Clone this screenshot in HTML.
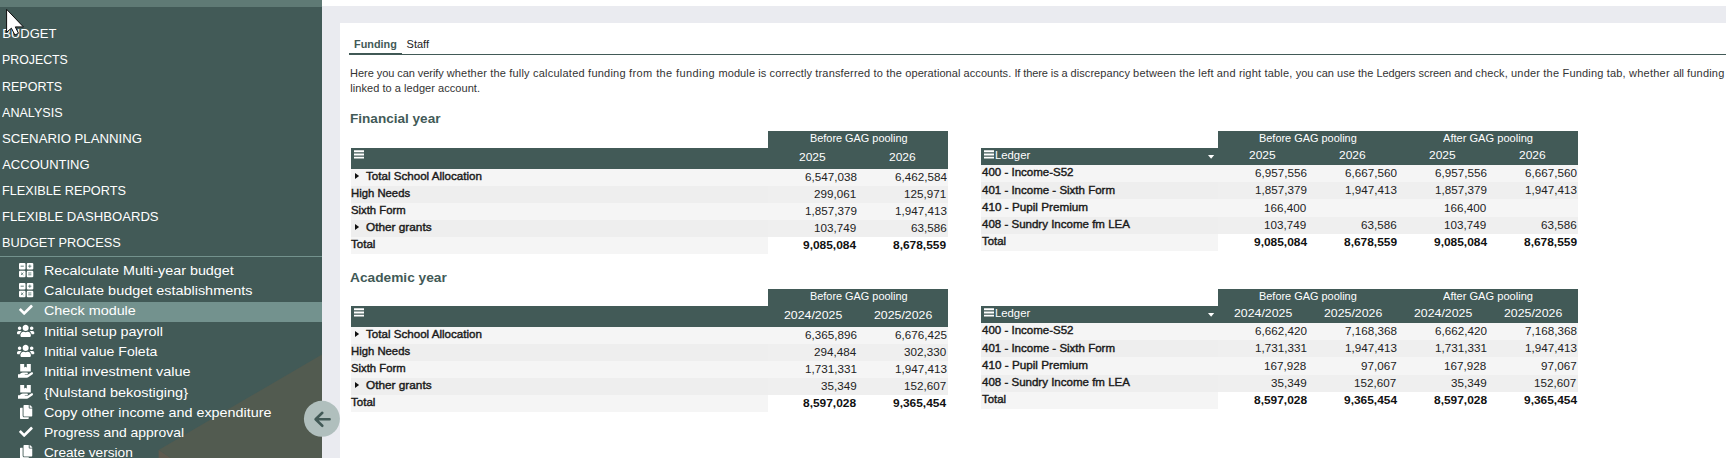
<!DOCTYPE html>
<html>
<head>
<meta charset="utf-8">
<title>Check module</title>
<style>
*{box-sizing:border-box;margin:0;padding:0}
html,body{width:1726px;height:458px;overflow:hidden;background:#fff;font-family:"Liberation Sans",sans-serif}
body{position:relative}
.x{position:absolute;white-space:pre;transform-origin:0 50%}
.r{position:absolute}
svg{position:absolute;overflow:visible}
</style>
</head>
<body>
<div class="r" style="left:322px;top:0px;width:1404px;height:6px;background:#fff;"></div>
<div class="r" style="left:322px;top:6px;width:1404px;height:452px;background:#eaebf0;"></div>
<div class="r" style="left:340px;top:23px;width:1386px;height:435px;background:#fff;"></div>
<div class="r" style="left:0px;top:0px;width:322px;height:458px;background:#425a57;"></div>
<div class="r" style="left:0px;top:0px;width:322px;height:7px;background:#5f7a75;"></div>
<svg style="left:0;top:0" width="322" height="458" viewBox="0 0 322 458"><polygon points="322,354.4 158.6,450 170.7,458 322,458" fill="#525b50"/><polygon points="158.6,450 158.6,458 170.7,458" fill="#5e5a4e"/></svg>
<div class="r" style="left:0px;top:256px;width:322px;height:1px;background:#73928d;"></div>
<div class="r" style="left:0px;top:302px;width:322px;height:20px;background:#73928e;"></div>
<div class="x" style="top:25.50px;font-size:13px;line-height:16px;color:#fff;left:2.20px;">BUDGET</div>
<div class="x" style="top:51.50px;font-size:13px;line-height:16px;color:#fff;left:2.20px;transform:scaleX(0.9489);">PROJECTS</div>
<div class="x" style="top:78.50px;font-size:13px;line-height:16px;color:#fff;left:2.20px;transform:scaleX(0.9615);">REPORTS</div>
<div class="x" style="top:104.50px;font-size:13px;line-height:16px;color:#fff;left:2.20px;transform:scaleX(0.9677);">ANALYSIS</div>
<div class="x" style="top:130.50px;font-size:13px;line-height:16px;color:#fff;left:2.20px;transform:scaleX(1.0146);">SCENARIO PLANNING</div>
<div class="x" style="top:156.50px;font-size:13px;line-height:16px;color:#fff;left:2.20px;">ACCOUNTING</div>
<div class="x" style="top:182.50px;font-size:13px;line-height:16px;color:#fff;left:2.20px;transform:scaleX(0.9762);">FLEXIBLE REPORTS</div>
<div class="x" style="top:208.50px;font-size:13px;line-height:16px;color:#fff;left:2.20px;transform:scaleX(1.0082);">FLEXIBLE DASHBOARDS</div>
<div class="x" style="top:234.50px;font-size:13px;line-height:16px;color:#fff;left:2.20px;transform:scaleX(0.9808);">BUDGET PROCESS</div>
<div class="x" style="top:262.50px;font-size:13px;line-height:16px;color:#fff;left:44.40px;transform:scaleX(1.1036);">Recalculate Multi-year budget</div>
<svg style="left:18.9px;top:262.80px" width="14.3" height="14.3" viewBox="0 0 14.3 14.3"><rect x="0.00" y="0.00" width="6.5" height="6.5" rx="1.1" fill="#fff"/><rect x="7.80" y="0.00" width="6.5" height="6.5" rx="1.1" fill="#fff"/><rect x="0.00" y="7.80" width="6.5" height="6.5" rx="1.1" fill="#fff"/><rect x="7.80" y="7.80" width="6.5" height="6.5" rx="1.1" fill="#fff"/><path d="M1.6 3.2h3.2" stroke="#61807b" stroke-width="1" fill="none"/><path d="M9.2 3.2h3.2M10.8 1.6v3.2" stroke="#61807b" stroke-width="1" fill="none"/><path d="M2 9.6l2.4 2.4M4.400 9.600l-2.400 2.400" stroke="#61807b" stroke-width="0.9" fill="none"/><path d="M9.200 10h3.200M9.200 11.800h3.200" stroke="#61807b" stroke-width="0.9" fill="none"/></svg>
<div class="x" style="top:282.50px;font-size:13px;line-height:16px;color:#fff;left:44.40px;transform:scaleX(1.1092);">Calculate budget establishments</div>
<svg style="left:18.9px;top:282.80px" width="14.3" height="14.3" viewBox="0 0 14.3 14.3"><rect x="0.00" y="0.00" width="6.5" height="6.5" rx="1.1" fill="#fff"/><rect x="7.80" y="0.00" width="6.5" height="6.5" rx="1.1" fill="#fff"/><rect x="0.00" y="7.80" width="6.5" height="6.5" rx="1.1" fill="#fff"/><rect x="7.80" y="7.80" width="6.5" height="6.5" rx="1.1" fill="#fff"/><path d="M1.6 3.2h3.2" stroke="#61807b" stroke-width="1" fill="none"/><path d="M9.2 3.2h3.2M10.8 1.6v3.2" stroke="#61807b" stroke-width="1" fill="none"/><path d="M2 9.6l2.4 2.4M4.400 9.600l-2.400 2.400" stroke="#61807b" stroke-width="0.9" fill="none"/><path d="M9.200 10h3.200M9.200 11.800h3.200" stroke="#61807b" stroke-width="0.9" fill="none"/></svg>
<div class="x" style="top:302.50px;font-size:13px;line-height:16px;color:#fff;left:44.40px;transform:scaleX(1.1046);">Check module</div>
<svg style="left:19.1px;top:303.40px" width="13.8" height="13.8" viewBox="0 0 512 512"><path fill="#fff" d="M173.898 439.404l-166.4-166.4c-9.997-9.997-9.997-26.206 0-36.204l36.203-36.204c9.997-9.998 26.207-9.998 36.204 0L192 312.69 432.095 72.596c9.997-9.997 26.207-9.997 36.204 0l36.203 36.204c9.997 9.997 9.997 26.206 0 36.204l-294.4 294.401c-9.998 9.997-26.207 9.997-36.204-.001z"/></svg>
<div class="x" style="top:323.50px;font-size:13px;line-height:16px;color:#fff;left:44.40px;transform:scaleX(1.1043);">Initial setup payroll</div>
<svg style="left:17.3px;top:324.18px" width="17.3" height="13.84" viewBox="0 0 640 512"><path fill="#fff" d="M96 224c35.3 0 64-28.7 64-64s-28.7-64-64-64-64 28.7-64 64 28.7 64 64 64zm448 0c35.3 0 64-28.7 64-64s-28.7-64-64-64-64 28.7-64 64 28.7 64 64 64zm32 32h-64c-17.6 0-33.500 7.100-45.100 18.600 40.300 22.100 68.900 62 75.100 109.400h66c17.700 0 32-14.300 32-32v-32c0-35.300-28.700-64-64-64zm-256 0c61.900 0 112-50.100 112-112S381.900 32 320 32 208 82.100 208 144s50.100 112 112 112zm76.800 32h-8.300c-20.800 10-43.900 16-68.500 16s-47.600-6-68.500-16h-8.300C179.600 288 128 339.600 128 403.200V432c0 26.500 21.500 48 48 48h288c26.500 0 48-21.500 48-48v-28.800c0-63.600-51.600-115.200-115.200-115.200zm-223.700-13.400C161.500 263.100 145.600 256 128 256H64c-35.300 0-64 28.700-64 64v32c0 17.700 14.300 32 32 32h65.900c6.300-47.400 34.900-87.300 75.200-109.400z"/></svg>
<div class="x" style="top:343.50px;font-size:13px;line-height:16px;color:#fff;left:44.40px;transform:scaleX(1.0823);">Initial value Foleta</div>
<svg style="left:17.3px;top:344.18px" width="17.3" height="13.84" viewBox="0 0 640 512"><path fill="#fff" d="M96 224c35.3 0 64-28.7 64-64s-28.7-64-64-64-64 28.7-64 64 28.7 64 64 64zm448 0c35.3 0 64-28.7 64-64s-28.7-64-64-64-64 28.7-64 64 28.7 64 64 64zm32 32h-64c-17.6 0-33.500 7.100-45.100 18.600 40.300 22.100 68.900 62 75.100 109.400h66c17.700 0 32-14.300 32-32v-32c0-35.300-28.700-64-64-64zm-256 0c61.900 0 112-50.100 112-112S381.900 32 320 32 208 82.100 208 144s50.100 112 112 112zm76.800 32h-8.300c-20.800 10-43.900 16-68.500 16s-47.600-6-68.500-16h-8.300C179.600 288 128 339.600 128 403.200V432c0 26.500 21.500 48 48 48h288c26.500 0 48-21.500 48-48v-28.800c0-63.600-51.600-115.200-115.200-115.200zm-223.700-13.400C161.500 263.100 145.600 256 128 256H64c-35.300 0-64 28.700-64 64v32c0 17.700 14.300 32 32 32h65.900c6.300-47.400 34.900-87.300 75.200-109.400z"/></svg>
<div class="x" style="top:363.50px;font-size:13px;line-height:16px;color:#fff;left:44.40px;transform:scaleX(1.1147);">Initial investment value</div>
<svg style="left:18.2px;top:364.20px" width="15.6" height="14" viewBox="0 0 15.600 14"><path fill="#fff" d="M2.200 0H6.200V3.500l1.300-0.800 1.300 0.800V0H12.800V7.400H2.200z"/><path fill="#fff" d="M0 10.200h1.600l1.500-1.100c0.500-0.400 1.100-0.600 1.700-0.600h4.100c0.600 0 1 0.400 1 0.900s-0.400 0.900-1 0.900H6.800v0.400h3l3.300-2.300c0.500-0.400 1.300-0.300 1.700 0.200 0.400 0.500 0.300 1.200-0.200 1.600l-4 2.900c-0.500 0.400-1.100 0.600-1.700 0.600H0z"/></svg>
<div class="x" style="top:384.50px;font-size:13px;line-height:16px;color:#fff;left:44.40px;transform:scaleX(1.1130);">{Nulstand bekostiging}</div>
<svg style="left:18.2px;top:385.20px" width="15.6" height="14" viewBox="0 0 15.600 14"><path fill="#fff" d="M2.200 0H6.200V3.500l1.300-0.800 1.300 0.800V0H12.800V7.400H2.200z"/><path fill="#fff" d="M0 10.200h1.600l1.500-1.100c0.500-0.400 1.100-0.600 1.700-0.600h4.100c0.600 0 1 0.400 1 0.900s-0.400 0.900-1 0.900H6.800v0.400h3l3.300-2.300c0.500-0.400 1.300-0.300 1.700 0.200 0.400 0.500 0.300 1.200-0.200 1.600l-4 2.900c-0.500 0.400-1.100 0.600-1.700 0.600H0z"/></svg>
<div class="x" style="top:404.50px;font-size:13px;line-height:16px;color:#fff;left:44.40px;transform:scaleX(1.1045);">Copy other income and expenditure</div>
<svg style="left:19.7px;top:404.90px" width="12.25" height="14" viewBox="0 0 448 512"><path fill="#fff" d="M320 448v40c0 13.255-10.745 24-24 24H24c-13.255 0-24-10.745-24-24V120c0-13.255 10.745-24 24-24h72v296c0 30.879 25.121 56 56 56h168zm0-344V0H152c-13.255 0-24 10.745-24 24v368c0 13.255 10.745 24 24 24h272c13.255 0 24-10.745 24-24V128H344c-13.200 0-24-10.800-24-24zm120.971-31.029L375.029 7.029A24 24 0 0 0 358.059 0H352v96h96v-6.059a24 24 0 0 0-7.029-16.970z"/></svg>
<div class="x" style="top:424.50px;font-size:13px;line-height:16px;color:#fff;left:44.40px;transform:scaleX(1.0702);">Progress and approval</div>
<svg style="left:19.1px;top:425.40px" width="13.8" height="13.8" viewBox="0 0 512 512"><path fill="#fff" d="M173.898 439.404l-166.4-166.4c-9.997-9.997-9.997-26.206 0-36.204l36.203-36.204c9.997-9.998 26.207-9.998 36.204 0L192 312.69 432.095 72.596c9.997-9.997 26.207-9.997 36.204 0l36.203 36.204c9.997 9.997 9.997 26.206 0 36.204l-294.4 294.401c-9.998 9.997-26.207 9.997-36.204-.001z"/></svg>
<div class="x" style="top:444.50px;font-size:13px;line-height:16px;color:#fff;left:44.40px;transform:scaleX(1.0503);">Create version</div>
<svg style="left:19.7px;top:444.90px" width="12.25" height="14" viewBox="0 0 448 512"><path fill="#fff" d="M320 448v40c0 13.255-10.745 24-24 24H24c-13.255 0-24-10.745-24-24V120c0-13.255 10.745-24 24-24h72v296c0 30.879 25.121 56 56 56h168zm0-344V0H152c-13.255 0-24 10.745-24 24v368c0 13.255 10.745 24 24 24h272c13.255 0 24-10.745 24-24V128H344c-13.200 0-24-10.800-24-24zm120.971-31.029L375.029 7.029A24 24 0 0 0 358.059 0H352v96h96v-6.059a24 24 0 0 0-7.029-16.970z"/></svg>
<svg style="left:304px;top:401px" width="36" height="36" viewBox="0 0 36 36"><circle cx="17.9" cy="17.8" r="18" fill="#b0bfbd"/><path d="M25.600 18.300H11.800M18.300 11.800l-6.700 6.500 6.700 6.500" stroke="#425a57" stroke-width="2.600" fill="none" stroke-linecap="round" stroke-linejoin="round"/></svg>
<div class="x" style="top:37.50px;font-size:11px;line-height:13px;color:#425a57;font-weight:bold;left:354.40px;transform:scaleX(0.9867);">Funding</div>
<div class="x" style="top:37.50px;font-size:11px;line-height:13px;color:#222;left:406.60px;">Staff</div>
<div class="r" style="left:349px;top:53px;width:53px;height:2px;background:#3f5754;"></div>
<div class="r" style="left:349px;top:54px;width:1377px;height:1px;background:#425a57;"></div>
<div class="x" style="top:66.50px;font-size:11px;line-height:13px;color:#333;left:350.10px;letter-spacing:-0.061px;">Here you can verify </div>
<div class="x" style="top:66.50px;font-size:11px;line-height:13px;color:#333;left:446.70px;letter-spacing:0.175px;">whether the fully </div>
<div class="x" style="top:66.50px;font-size:11px;line-height:13px;color:#333;left:533.00px;letter-spacing:0.230px;">calculated funding </div>
<div class="x" style="top:66.50px;font-size:11px;line-height:13px;color:#333;left:629.10px;letter-spacing:0.396px;">from the funding </div>
<div class="x" style="top:66.50px;font-size:11px;line-height:13px;color:#333;left:718.40px;letter-spacing:0.107px;">module is correctly </div>
<div class="x" style="top:66.50px;font-size:11px;line-height:13px;color:#333;left:815.30px;letter-spacing:0.167px;">transferred to the </div>
<div class="x" style="top:66.50px;font-size:11px;line-height:13px;color:#333;left:905.30px;letter-spacing:0.066px;">operational accounts. </div>
<div class="x" style="top:66.50px;font-size:11px;line-height:13px;color:#333;left:1014.40px;letter-spacing:-0.092px;">If there is a </div>
<div class="x" style="top:66.50px;font-size:11px;line-height:13px;color:#333;left:1070.60px;letter-spacing:0.061px;">discrepancy </div>
<div class="x" style="top:66.50px;font-size:11px;line-height:13px;color:#333;left:1133.10px;letter-spacing:0.183px;">between the </div>
<div class="x" style="top:66.50px;font-size:11px;line-height:13px;color:#333;left:1198.30px;letter-spacing:0.162px;">left and </div>
<div class="x" style="top:66.50px;font-size:11px;line-height:13px;color:#333;left:1238.90px;letter-spacing:0.183px;">right table, </div>
<div class="x" style="top:66.50px;font-size:11px;line-height:13px;color:#333;left:1295.70px;letter-spacing:-0.037px;">you can </div>
<div class="x" style="top:66.50px;font-size:11px;line-height:13px;color:#333;left:1337.00px;letter-spacing:0.032px;">use the </div>
<div class="x" style="top:66.50px;font-size:11px;line-height:13px;color:#333;left:1376.40px;letter-spacing:-0.089px;">Ledgers </div>
<div class="x" style="top:66.50px;font-size:11px;line-height:13px;color:#333;left:1418.50px;letter-spacing:-0.062px;">screen and </div>
<div class="x" style="top:66.50px;font-size:11px;line-height:13px;color:#333;left:1475.30px;letter-spacing:0.120px;">check, </div>
<div class="x" style="top:66.50px;font-size:11px;line-height:13px;color:#333;left:1511.00px;letter-spacing:0.195px;">under the </div>
<div class="x" style="top:66.50px;font-size:11px;line-height:13px;color:#333;left:1562.50px;letter-spacing:0.173px;">Funding </div>
<div class="x" style="top:66.50px;font-size:11px;line-height:13px;color:#333;left:1606.70px;letter-spacing:0.179px;">tab, </div>
<div class="x" style="top:66.50px;font-size:11px;line-height:13px;color:#333;left:1629.00px;letter-spacing:0.250px;">whether </div>
<div class="x" style="top:66.50px;font-size:11px;line-height:13px;color:#333;left:1673.20px;letter-spacing:-0.066px;">all </div>
<div class="x" style="top:66.50px;font-size:11px;line-height:13px;color:#333;left:1687.00px;letter-spacing:0.201px;">funding</div>
<div class="x" style="top:66.50px;font-size:11px;line-height:13px;color:#333;left:1728.00px;transform:scaleX(0.8802);">is</div>
<div class="x" style="top:81.50px;font-size:11px;line-height:13px;color:#333;left:350.30px;letter-spacing:0.049px;">linked to a ledger account.</div>
<div class="x" style="top:110.50px;font-size:13px;line-height:16px;color:#425a57;font-weight:bold;left:350.30px;transform:scaleX(1.0436);">Financial year</div>
<div class="x" style="top:269.50px;font-size:13px;line-height:16px;color:#425a57;font-weight:bold;left:350.00px;transform:scaleX(1.0547);">Academic year</div>
<div class="r" style="left:768px;top:131px;width:180px;height:17px;background:#425a57;"></div>
<div class="r" style="left:351px;top:148px;width:597px;height:21px;background:#425a57;"></div>
<div class="x" style="top:131.50px;font-size:11px;line-height:13px;color:#fff;left:809.50px;transform:scaleX(0.9903);">Before GAG pooling</div>
<svg style="left:354.2px;top:150px" width="10" height="9" viewBox="0 0 10 9"><path d="M0 0.300h10v1.900H0zM0 3.500h10v1.900H0zM0 6.700h10v1.900H0z" fill="#fff"/></svg>
<div class="x" style="top:150.50px;font-size:11.0px;line-height:13px;color:#fff;left:799.36px;transform:scaleX(1.0900);">2025</div>
<div class="x" style="top:150.50px;font-size:11.0px;line-height:13px;color:#fff;left:889.36px;transform:scaleX(1.0900);">2026</div>
<div class="r" style="left:351px;top:169px;width:417px;height:17px;background:#f5f5f5;"></div>
<div class="r" style="left:768px;top:169px;width:180px;height:17px;background:#f5f5f5;"></div>
<svg style="left:355.3px;top:173.40px" width="4.1" height="6" viewBox="0 0 4.100 6"><path d="M0 0l4.100 3L0 6z" fill="#111"/></svg>
<div class="x" style="top:169.50px;font-size:11px;line-height:13px;color:#1a1a1a;-webkit-text-stroke:0.4px #1a1a1a;left:366.30px;transform:scaleX(1.0538);">Total School Allocation</div>
<div class="x" style="top:170.50px;font-size:11px;line-height:13px;color:#222;left:804.63px;transform:scaleX(1.0600);">6,547,038</div>
<div class="x" style="top:170.50px;font-size:11px;line-height:13px;color:#222;left:894.63px;transform:scaleX(1.0600);">6,462,584</div>
<div class="r" style="left:351px;top:186px;width:417px;height:17px;background:#eeeeee;"></div>
<div class="r" style="left:768px;top:186px;width:180px;height:17px;background:#efefef;"></div>
<div class="x" style="top:186.50px;font-size:11px;line-height:13px;color:#1a1a1a;-webkit-text-stroke:0.4px #1a1a1a;left:351.30px;transform:scaleX(1.0281);">High Needs</div>
<div class="x" style="top:187.50px;font-size:11px;line-height:13px;color:#222;left:814.35px;transform:scaleX(1.0600);">299,061</div>
<div class="x" style="top:187.50px;font-size:11px;line-height:13px;color:#222;left:904.35px;transform:scaleX(1.0600);">125,971</div>
<div class="r" style="left:351px;top:203px;width:417px;height:17px;background:#f5f5f5;"></div>
<div class="r" style="left:768px;top:203px;width:180px;height:17px;background:#f5f5f5;"></div>
<div class="x" style="top:203.50px;font-size:11px;line-height:13px;color:#1a1a1a;-webkit-text-stroke:0.4px #1a1a1a;left:351.30px;transform:scaleX(1.0266);">Sixth Form</div>
<div class="x" style="top:204.50px;font-size:11px;line-height:13px;color:#222;left:804.63px;transform:scaleX(1.0600);">1,857,379</div>
<div class="x" style="top:204.50px;font-size:11px;line-height:13px;color:#222;left:894.63px;transform:scaleX(1.0600);">1,947,413</div>
<div class="r" style="left:351px;top:220px;width:417px;height:17px;background:#eeeeee;"></div>
<div class="r" style="left:768px;top:220px;width:180px;height:17px;background:#efefef;"></div>
<svg style="left:355.3px;top:224.40px" width="4.1" height="6" viewBox="0 0 4.100 6"><path d="M0 0l4.100 3L0 6z" fill="#111"/></svg>
<div class="x" style="top:220.50px;font-size:11px;line-height:13px;color:#1a1a1a;-webkit-text-stroke:0.4px #1a1a1a;left:366.30px;transform:scaleX(1.0729);">Other grants</div>
<div class="x" style="top:221.50px;font-size:11px;line-height:13px;color:#222;left:814.35px;transform:scaleX(1.0600);">103,749</div>
<div class="x" style="top:221.50px;font-size:11px;line-height:13px;color:#222;left:910.82px;transform:scaleX(1.0600);">63,586</div>
<div class="r" style="left:351px;top:237px;width:417px;height:17px;background:#f5f5f5;"></div>
<div class="x" style="top:237.50px;font-size:11px;line-height:13px;color:#1a1a1a;-webkit-text-stroke:0.4px #1a1a1a;left:351.30px;transform:scaleX(1.0495);">Total</div>
<div class="x" style="top:238.50px;font-size:11px;line-height:13px;color:#111;font-weight:bold;left:803.40px;transform:scaleX(1.0850);">9,085,084</div>
<div class="x" style="top:238.50px;font-size:11px;line-height:13px;color:#111;font-weight:bold;left:893.40px;transform:scaleX(1.0850);">8,678,559</div>
<div class="r" style="left:1218px;top:131px;width:360px;height:17px;background:#425a57;"></div>
<div class="r" style="left:981px;top:148px;width:597px;height:17px;background:#425a57;"></div>
<div class="x" style="top:131.50px;font-size:11px;line-height:13px;color:#fff;left:1259.00px;transform:scaleX(0.9924);">Before GAG pooling</div>
<div class="x" style="top:131.50px;font-size:11px;line-height:13px;color:#fff;left:1443.00px;transform:scaleX(1.0081);">After GAG pooling</div>
<svg style="left:984.4px;top:149.6px" width="10" height="9" viewBox="0 0 10 9"><path d="M0 0.300h10v1.900H0zM0 3.500h10v1.900H0zM0 6.700h10v1.900H0z" fill="#fff"/></svg>
<div class="x" style="top:148.50px;font-size:11px;line-height:13px;color:#fff;left:995.30px;transform:scaleX(1.0273);">Ledger</div>
<svg style="left:1207.8px;top:155.4px" width="6.2" height="3.800" viewBox="0 0 6.200 3.800"><path d="M0 0h6.200L3.100 3.800z" fill="#fff"/></svg>
<div class="x" style="top:148.50px;font-size:11.0px;line-height:13px;color:#fff;left:1249.36px;transform:scaleX(1.0900);">2025</div>
<div class="x" style="top:148.50px;font-size:11.0px;line-height:13px;color:#fff;left:1339.36px;transform:scaleX(1.0900);">2026</div>
<div class="x" style="top:148.50px;font-size:11.0px;line-height:13px;color:#fff;left:1429.36px;transform:scaleX(1.0900);">2025</div>
<div class="x" style="top:148.50px;font-size:11.0px;line-height:13px;color:#fff;left:1519.36px;transform:scaleX(1.0900);">2026</div>
<div class="r" style="left:981px;top:165px;width:237px;height:18px;background:#f5f5f5;"></div>
<div class="r" style="left:1218px;top:165px;width:360px;height:18px;background:#f5f5f5;"></div>
<div class="x" style="top:165.50px;font-size:11px;line-height:13px;color:#1a1a1a;-webkit-text-stroke:0.4px #1a1a1a;left:981.80px;transform:scaleX(1.0465);">400 - Income-S52</div>
<div class="x" style="top:166.50px;font-size:11px;line-height:13px;color:#222;left:1254.63px;transform:scaleX(1.0600);">6,957,556</div>
<div class="x" style="top:166.50px;font-size:11px;line-height:13px;color:#222;left:1344.63px;transform:scaleX(1.0600);">6,667,560</div>
<div class="x" style="top:166.50px;font-size:11px;line-height:13px;color:#222;left:1434.63px;transform:scaleX(1.0600);">6,957,556</div>
<div class="x" style="top:166.50px;font-size:11px;line-height:13px;color:#222;left:1524.63px;transform:scaleX(1.0600);">6,667,560</div>
<div class="r" style="left:981px;top:182px;width:237px;height:18px;background:#eeeeee;"></div>
<div class="r" style="left:1218px;top:182px;width:360px;height:18px;background:#efefef;"></div>
<div class="x" style="top:183.50px;font-size:11px;line-height:13px;color:#1a1a1a;-webkit-text-stroke:0.4px #1a1a1a;left:981.80px;transform:scaleX(1.0460);">401 - Income - Sixth Form</div>
<div class="x" style="top:183.50px;font-size:11px;line-height:13px;color:#222;left:1254.63px;transform:scaleX(1.0600);">1,857,379</div>
<div class="x" style="top:183.50px;font-size:11px;line-height:13px;color:#222;left:1344.63px;transform:scaleX(1.0600);">1,947,413</div>
<div class="x" style="top:183.50px;font-size:11px;line-height:13px;color:#222;left:1434.63px;transform:scaleX(1.0600);">1,857,379</div>
<div class="x" style="top:183.50px;font-size:11px;line-height:13px;color:#222;left:1524.63px;transform:scaleX(1.0600);">1,947,413</div>
<div class="r" style="left:981px;top:199px;width:237px;height:18px;background:#f5f5f5;"></div>
<div class="r" style="left:1218px;top:199px;width:360px;height:18px;background:#f5f5f5;"></div>
<div class="x" style="top:200.50px;font-size:11px;line-height:13px;color:#1a1a1a;-webkit-text-stroke:0.4px #1a1a1a;left:981.80px;transform:scaleX(1.0637);">410 - Pupil Premium</div>
<div class="x" style="top:201.50px;font-size:11px;line-height:13px;color:#222;left:1264.35px;transform:scaleX(1.0600);">166,400</div>
<div class="x" style="top:201.50px;font-size:11px;line-height:13px;color:#222;left:1444.35px;transform:scaleX(1.0600);">166,400</div>
<div class="r" style="left:981px;top:217px;width:237px;height:18px;background:#eeeeee;"></div>
<div class="r" style="left:1218px;top:217px;width:360px;height:18px;background:#efefef;"></div>
<div class="x" style="top:217.50px;font-size:11px;line-height:13px;color:#1a1a1a;-webkit-text-stroke:0.4px #1a1a1a;left:981.80px;transform:scaleX(1.0472);">408 - Sundry Income fm LEA</div>
<div class="x" style="top:218.50px;font-size:11px;line-height:13px;color:#222;left:1264.35px;transform:scaleX(1.0600);">103,749</div>
<div class="x" style="top:218.50px;font-size:11px;line-height:13px;color:#222;left:1360.82px;transform:scaleX(1.0600);">63,586</div>
<div class="x" style="top:218.50px;font-size:11px;line-height:13px;color:#222;left:1444.35px;transform:scaleX(1.0600);">103,749</div>
<div class="x" style="top:218.50px;font-size:11px;line-height:13px;color:#222;left:1540.82px;transform:scaleX(1.0600);">63,586</div>
<div class="r" style="left:981px;top:234px;width:237px;height:17px;background:#f5f5f5;"></div>
<div class="r" style="left:1218px;top:234px;width:360px;height:17px;background:#fff;"></div>
<div class="x" style="top:234.50px;font-size:11px;line-height:13px;color:#1a1a1a;-webkit-text-stroke:0.4px #1a1a1a;left:981.80px;transform:scaleX(1.0323);">Total</div>
<div class="x" style="top:235.50px;font-size:11px;line-height:13px;color:#111;font-weight:bold;left:1253.90px;transform:scaleX(1.0850);">9,085,084</div>
<div class="x" style="top:235.50px;font-size:11px;line-height:13px;color:#111;font-weight:bold;left:1343.90px;transform:scaleX(1.0850);">8,678,559</div>
<div class="x" style="top:235.50px;font-size:11px;line-height:13px;color:#111;font-weight:bold;left:1433.90px;transform:scaleX(1.0850);">9,085,084</div>
<div class="x" style="top:235.50px;font-size:11px;line-height:13px;color:#111;font-weight:bold;left:1523.90px;transform:scaleX(1.0850);">8,678,559</div>
<div class="r" style="left:768px;top:289px;width:180px;height:17px;background:#425a57;"></div>
<div class="r" style="left:351px;top:306px;width:597px;height:21px;background:#425a57;"></div>
<div class="x" style="top:289.50px;font-size:11px;line-height:13px;color:#fff;left:809.50px;transform:scaleX(0.9903);">Before GAG pooling</div>
<svg style="left:354.2px;top:308px" width="10" height="9" viewBox="0 0 10 9"><path d="M0 0.300h10v1.900H0zM0 3.500h10v1.900H0zM0 6.700h10v1.900H0z" fill="#fff"/></svg>
<div class="x" style="top:308.50px;font-size:11.0px;line-height:13px;color:#fff;left:783.58px;transform:scaleX(1.1200);">2024/2025</div>
<div class="x" style="top:308.50px;font-size:11.0px;line-height:13px;color:#fff;left:873.58px;transform:scaleX(1.1200);">2025/2026</div>
<div class="r" style="left:351px;top:327px;width:417px;height:17px;background:#f5f5f5;"></div>
<div class="r" style="left:768px;top:327px;width:180px;height:17px;background:#f5f5f5;"></div>
<svg style="left:355.3px;top:331.40px" width="4.1" height="6" viewBox="0 0 4.100 6"><path d="M0 0l4.100 3L0 6z" fill="#111"/></svg>
<div class="x" style="top:327.50px;font-size:11px;line-height:13px;color:#1a1a1a;-webkit-text-stroke:0.4px #1a1a1a;left:366.30px;transform:scaleX(1.0538);">Total School Allocation</div>
<div class="x" style="top:328.50px;font-size:11px;line-height:13px;color:#222;left:804.63px;transform:scaleX(1.0600);">6,365,896</div>
<div class="x" style="top:328.50px;font-size:11px;line-height:13px;color:#222;left:894.63px;transform:scaleX(1.0600);">6,676,425</div>
<div class="r" style="left:351px;top:344px;width:417px;height:17px;background:#eeeeee;"></div>
<div class="r" style="left:768px;top:344px;width:180px;height:17px;background:#efefef;"></div>
<div class="x" style="top:344.50px;font-size:11px;line-height:13px;color:#1a1a1a;-webkit-text-stroke:0.4px #1a1a1a;left:351.30px;transform:scaleX(1.0281);">High Needs</div>
<div class="x" style="top:345.50px;font-size:11px;line-height:13px;color:#222;left:814.35px;transform:scaleX(1.0600);">294,484</div>
<div class="x" style="top:345.50px;font-size:11px;line-height:13px;color:#222;left:904.35px;transform:scaleX(1.0600);">302,330</div>
<div class="r" style="left:351px;top:361px;width:417px;height:17px;background:#f5f5f5;"></div>
<div class="r" style="left:768px;top:361px;width:180px;height:17px;background:#f5f5f5;"></div>
<div class="x" style="top:361.50px;font-size:11px;line-height:13px;color:#1a1a1a;-webkit-text-stroke:0.4px #1a1a1a;left:351.30px;transform:scaleX(1.0266);">Sixth Form</div>
<div class="x" style="top:362.50px;font-size:11px;line-height:13px;color:#222;left:804.63px;transform:scaleX(1.0600);">1,731,331</div>
<div class="x" style="top:362.50px;font-size:11px;line-height:13px;color:#222;left:894.63px;transform:scaleX(1.0600);">1,947,413</div>
<div class="r" style="left:351px;top:378px;width:417px;height:17px;background:#eeeeee;"></div>
<div class="r" style="left:768px;top:378px;width:180px;height:17px;background:#efefef;"></div>
<svg style="left:355.3px;top:382.40px" width="4.1" height="6" viewBox="0 0 4.100 6"><path d="M0 0l4.100 3L0 6z" fill="#111"/></svg>
<div class="x" style="top:378.50px;font-size:11px;line-height:13px;color:#1a1a1a;-webkit-text-stroke:0.4px #1a1a1a;left:366.30px;transform:scaleX(1.0729);">Other grants</div>
<div class="x" style="top:379.50px;font-size:11px;line-height:13px;color:#222;left:820.82px;transform:scaleX(1.0600);">35,349</div>
<div class="x" style="top:379.50px;font-size:11px;line-height:13px;color:#222;left:904.35px;transform:scaleX(1.0600);">152,607</div>
<div class="r" style="left:351px;top:395px;width:417px;height:17px;background:#f5f5f5;"></div>
<div class="x" style="top:395.50px;font-size:11px;line-height:13px;color:#1a1a1a;-webkit-text-stroke:0.4px #1a1a1a;left:351.30px;transform:scaleX(1.0495);">Total</div>
<div class="x" style="top:396.50px;font-size:11px;line-height:13px;color:#111;font-weight:bold;left:803.40px;transform:scaleX(1.0850);">8,597,028</div>
<div class="x" style="top:396.50px;font-size:11px;line-height:13px;color:#111;font-weight:bold;left:893.40px;transform:scaleX(1.0850);">9,365,454</div>
<div class="r" style="left:1218px;top:289px;width:360px;height:17px;background:#425a57;"></div>
<div class="r" style="left:981px;top:306px;width:597px;height:17px;background:#425a57;"></div>
<div class="x" style="top:289.50px;font-size:11px;line-height:13px;color:#fff;left:1259.00px;transform:scaleX(0.9924);">Before GAG pooling</div>
<div class="x" style="top:289.50px;font-size:11px;line-height:13px;color:#fff;left:1443.00px;transform:scaleX(1.0081);">After GAG pooling</div>
<svg style="left:984.4px;top:307.6px" width="10" height="9" viewBox="0 0 10 9"><path d="M0 0.300h10v1.900H0zM0 3.500h10v1.900H0zM0 6.700h10v1.900H0z" fill="#fff"/></svg>
<div class="x" style="top:306.50px;font-size:11px;line-height:13px;color:#fff;left:995.30px;transform:scaleX(1.0273);">Ledger</div>
<svg style="left:1207.8px;top:313.4px" width="6.2" height="3.800" viewBox="0 0 6.200 3.800"><path d="M0 0h6.200L3.100 3.800z" fill="#fff"/></svg>
<div class="x" style="top:306.50px;font-size:11.0px;line-height:13px;color:#fff;left:1233.58px;transform:scaleX(1.1200);">2024/2025</div>
<div class="x" style="top:306.50px;font-size:11.0px;line-height:13px;color:#fff;left:1323.58px;transform:scaleX(1.1200);">2025/2026</div>
<div class="x" style="top:306.50px;font-size:11.0px;line-height:13px;color:#fff;left:1413.58px;transform:scaleX(1.1200);">2024/2025</div>
<div class="x" style="top:306.50px;font-size:11.0px;line-height:13px;color:#fff;left:1503.58px;transform:scaleX(1.1200);">2025/2026</div>
<div class="r" style="left:981px;top:323px;width:237px;height:18px;background:#f5f5f5;"></div>
<div class="r" style="left:1218px;top:323px;width:360px;height:18px;background:#f5f5f5;"></div>
<div class="x" style="top:323.50px;font-size:11px;line-height:13px;color:#1a1a1a;-webkit-text-stroke:0.4px #1a1a1a;left:981.80px;transform:scaleX(1.0465);">400 - Income-S52</div>
<div class="x" style="top:324.50px;font-size:11px;line-height:13px;color:#222;left:1254.63px;transform:scaleX(1.0600);">6,662,420</div>
<div class="x" style="top:324.50px;font-size:11px;line-height:13px;color:#222;left:1344.63px;transform:scaleX(1.0600);">7,168,368</div>
<div class="x" style="top:324.50px;font-size:11px;line-height:13px;color:#222;left:1434.63px;transform:scaleX(1.0600);">6,662,420</div>
<div class="x" style="top:324.50px;font-size:11px;line-height:13px;color:#222;left:1524.63px;transform:scaleX(1.0600);">7,168,368</div>
<div class="r" style="left:981px;top:340px;width:237px;height:18px;background:#eeeeee;"></div>
<div class="r" style="left:1218px;top:340px;width:360px;height:18px;background:#efefef;"></div>
<div class="x" style="top:341.50px;font-size:11px;line-height:13px;color:#1a1a1a;-webkit-text-stroke:0.4px #1a1a1a;left:981.80px;transform:scaleX(1.0460);">401 - Income - Sixth Form</div>
<div class="x" style="top:341.50px;font-size:11px;line-height:13px;color:#222;left:1254.63px;transform:scaleX(1.0600);">1,731,331</div>
<div class="x" style="top:341.50px;font-size:11px;line-height:13px;color:#222;left:1344.63px;transform:scaleX(1.0600);">1,947,413</div>
<div class="x" style="top:341.50px;font-size:11px;line-height:13px;color:#222;left:1434.63px;transform:scaleX(1.0600);">1,731,331</div>
<div class="x" style="top:341.50px;font-size:11px;line-height:13px;color:#222;left:1524.63px;transform:scaleX(1.0600);">1,947,413</div>
<div class="r" style="left:981px;top:357px;width:237px;height:18px;background:#f5f5f5;"></div>
<div class="r" style="left:1218px;top:357px;width:360px;height:18px;background:#f5f5f5;"></div>
<div class="x" style="top:358.50px;font-size:11px;line-height:13px;color:#1a1a1a;-webkit-text-stroke:0.4px #1a1a1a;left:981.80px;transform:scaleX(1.0637);">410 - Pupil Premium</div>
<div class="x" style="top:359.50px;font-size:11px;line-height:13px;color:#222;left:1264.35px;transform:scaleX(1.0600);">167,928</div>
<div class="x" style="top:359.50px;font-size:11px;line-height:13px;color:#222;left:1360.82px;transform:scaleX(1.0600);">97,067</div>
<div class="x" style="top:359.50px;font-size:11px;line-height:13px;color:#222;left:1444.35px;transform:scaleX(1.0600);">167,928</div>
<div class="x" style="top:359.50px;font-size:11px;line-height:13px;color:#222;left:1540.82px;transform:scaleX(1.0600);">97,067</div>
<div class="r" style="left:981px;top:375px;width:237px;height:18px;background:#eeeeee;"></div>
<div class="r" style="left:1218px;top:375px;width:360px;height:18px;background:#efefef;"></div>
<div class="x" style="top:375.50px;font-size:11px;line-height:13px;color:#1a1a1a;-webkit-text-stroke:0.4px #1a1a1a;left:981.80px;transform:scaleX(1.0472);">408 - Sundry Income fm LEA</div>
<div class="x" style="top:376.50px;font-size:11px;line-height:13px;color:#222;left:1270.82px;transform:scaleX(1.0600);">35,349</div>
<div class="x" style="top:376.50px;font-size:11px;line-height:13px;color:#222;left:1354.35px;transform:scaleX(1.0600);">152,607</div>
<div class="x" style="top:376.50px;font-size:11px;line-height:13px;color:#222;left:1450.82px;transform:scaleX(1.0600);">35,349</div>
<div class="x" style="top:376.50px;font-size:11px;line-height:13px;color:#222;left:1534.35px;transform:scaleX(1.0600);">152,607</div>
<div class="r" style="left:981px;top:392px;width:237px;height:17px;background:#f5f5f5;"></div>
<div class="r" style="left:1218px;top:392px;width:360px;height:17px;background:#fff;"></div>
<div class="x" style="top:392.50px;font-size:11px;line-height:13px;color:#1a1a1a;-webkit-text-stroke:0.4px #1a1a1a;left:981.80px;transform:scaleX(1.0323);">Total</div>
<div class="x" style="top:393.50px;font-size:11px;line-height:13px;color:#111;font-weight:bold;left:1253.90px;transform:scaleX(1.0850);">8,597,028</div>
<div class="x" style="top:393.50px;font-size:11px;line-height:13px;color:#111;font-weight:bold;left:1343.90px;transform:scaleX(1.0850);">9,365,454</div>
<div class="x" style="top:393.50px;font-size:11px;line-height:13px;color:#111;font-weight:bold;left:1433.90px;transform:scaleX(1.0850);">8,597,028</div>
<div class="x" style="top:393.50px;font-size:11px;line-height:13px;color:#111;font-weight:bold;left:1523.90px;transform:scaleX(1.0850);">9,365,454</div>
<svg style="left:0;top:0" width="40" height="44" viewBox="0 0 40 44"><path d="M6.600 9.300V32.300l4.800-4.100 3.500 6.800 3.600-1.700-3.200-6.400h8.100z" fill="#fff" stroke="#0c0c0c" stroke-width="1" stroke-linejoin="miter"/></svg>
</body>
</html>
